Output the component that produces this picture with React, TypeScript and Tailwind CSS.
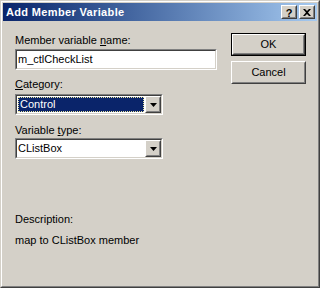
import React from 'react';

function Raised({ className = '', children }: { className?: string; children?: React.ReactNode }) {
  return (
    <div className={`border border-t-white border-l-white border-r-[#404040] border-b-[#404040] bg-[#d4d0c8] ${className}`}>
      <div className="w-full h-full border border-t-[#d4d0c8] border-l-[#d4d0c8] border-r-[#808080] border-b-[#808080] flex items-center justify-center">
        {children}
      </div>
    </div>
  );
}

function Sunken({ className = '', children }: { className?: string; children?: React.ReactNode }) {
  return (
    <div className={`border border-t-[#808080] border-l-[#808080] border-r-white border-b-white ${className}`}>
      <div className="w-full h-full border border-t-[#404040] border-l-[#404040] border-r-[#d4d0c8] border-b-[#d4d0c8] bg-white flex">
        {children}
      </div>
    </div>
  );
}

function Arrow() {
  return (
    <svg width="7" height="4" viewBox="0 0 7 4">
      <polygon points="0,0 7,0 3.5,4" fill="#000" />
    </svg>
  );
}

function Combo({ value, selected }: { value: string; selected?: boolean }) {
  return (
    <Sunken className="w-[148px] h-[21px]">
      <div className="flex-1 flex">
        {selected ? (
          <div className="flex-1 m-px bg-[#0a246a] text-white border border-dotted border-[#e8e4a0] pl-[1px] leading-[13px]">
            {value}
          </div>
        ) : (
          <div className="flex-1 pl-[1px] pt-[2px] leading-[13px]">{value}</div>
        )}
      </div>
      <Raised className="w-[16px] h-[17px]">
        <Arrow />
      </Raised>
    </Sunken>
  );
}

export default function App() {
  return (
    <div
      className="w-[320px] h-[288px] bg-[#d4d0c8] border border-t-[#d4d0c8] border-l-[#d4d0c8] border-r-[#404040] border-b-[#404040] text-[11px] text-black"
      style={{ fontFamily: '"Liberation Sans", Arial, sans-serif' }}
    >
      <div className="h-full border border-t-white border-l-white border-r-[#808080] border-b-[#808080] p-px flex flex-col">
        <div className="h-[18px] flex items-center justify-between bg-gradient-to-r from-[#0a246a] to-[#a6caf0] pl-[3px] pr-[2px]">
          <span className="text-white font-bold text-[11px] leading-[13px] tracking-[0.35px]">Add Member Variable</span>
          <div className="flex gap-[2px]">
            <Raised className="w-[16px] h-[14px]">
              <span className="font-bold text-[11px] leading-[10px] pt-px">?</span>
            </Raised>
            <Raised className="w-[16px] h-[14px]">
              <svg width="8" height="7" viewBox="0 0 8 7">
                <path d="M0 0h2l2 2 2-2h2L5 3.5 8 7H6L4 5 2 7H0l3-3.5z" fill="#000" />
              </svg>
            </Raised>
          </div>
        </div>

        <div className="flex flex-1 pl-[12px]">
          <div className="w-[202px] flex flex-col pt-[13px]">
            <div className="leading-[13px]">
              Member variable <span className="underline">n</span>ame:
            </div>
            <Sunken className="mt-[2px] w-[202px] h-[21px]">
              <div className="pl-[1px] pt-[2px] leading-[13px]">m_ctlCheckList</div>
            </Sunken>

            <div className="leading-[13px] mt-[8px]">
              <span className="underline">C</span>ategory:
            </div>
            <div className="mt-[3px]">
              <Combo value="Control" selected />
            </div>

            <div className="leading-[13px] mt-[9px]">
              Variable <span className="underline">t</span>ype:
            </div>
            <div className="mt-[1px]">
              <Combo value="CListBox" />
            </div>

            <div className="leading-[13px] mt-[54px]">Description:</div>
            <div className="leading-[13px] mt-[8px]">map to CListBox member</div>
          </div>

          <div className="ml-[14px] pt-[12px] flex flex-col gap-[5px]">
            <div className="border border-black">
              <Raised className="w-[73px] h-[21px]">
                <span className="leading-[13px]">OK</span>
              </Raised>
            </div>
            <Raised className="w-[75px] h-[23px]">
              <span className="leading-[13px]">Cancel</span>
            </Raised>
          </div>
        </div>
      </div>
    </div>
  );
}
